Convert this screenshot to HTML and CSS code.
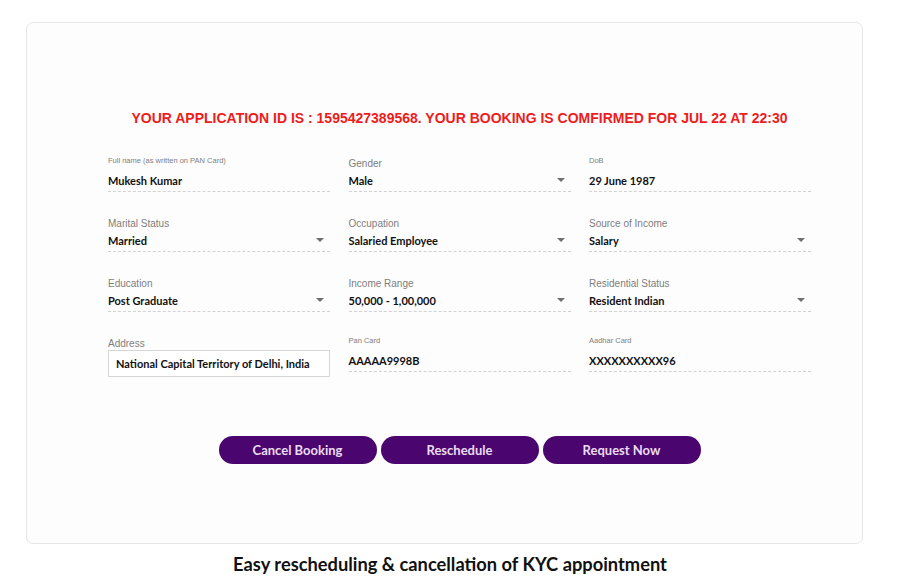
FILE: index.html
```html
<!DOCTYPE html>
<html lang="en">
  <head>
    <title>KYC Booking</title>
    <meta charset="UTF-8" />
    <meta name="viewport" content="width=device-width" />
    <link rel="stylesheet" href="styles.css">
  </head>
  <body>
    <section class="card">
      <h1 class="card__title">YOUR APPLICATION ID IS : 1595427389568. YOUR BOOKING IS COMFIRMED FOR JUL 22 AT 22:30</h1>
      <div class="fields">
        <div class="field">
          <span class="field__label field__label--small">Full name (as written on PAN Card)</span>
          <div class="field__value">Mukesh Kumar</div>
        </div>
        <div class="field">
          <span class="field__label">Gender</span>
          <div class="field__value">Male <i class="caret"></i></div>
        </div>
        <div class="field">
          <span class="field__label field__label--small">DoB</span>
          <div class="field__value">29 June 1987</div>
        </div>

        <div class="field">
          <span class="field__label">Marital Status</span>
          <div class="field__value">Married <i class="caret"></i></div>
        </div>
        <div class="field">
          <span class="field__label">Occupation</span>
          <div class="field__value">Salaried Employee <i class="caret"></i></div>
        </div>
        <div class="field">
          <span class="field__label">Source of Income</span>
          <div class="field__value">Salary <i class="caret"></i></div>
        </div>

        <div class="field">
          <span class="field__label">Education</span>
          <div class="field__value">Post Graduate <i class="caret"></i></div>
        </div>
        <div class="field">
          <span class="field__label">Income Range</span>
          <div class="field__value">50,000 - 1,00,000 <i class="caret"></i></div>
        </div>
        <div class="field">
          <span class="field__label">Residential Status</span>
          <div class="field__value">Resident Indian <i class="caret"></i></div>
        </div>

        <div class="field">
          <span class="field__label">Address</span>
          <div class="field__box">National Capital Territory of Delhi, India</div>
        </div>
        <div class="field">
          <span class="field__label field__label--small">Pan Card</span>
          <div class="field__value">AAAAA9998B</div>
        </div>
        <div class="field">
          <span class="field__label field__label--small">Aadhar Card</span>
          <div class="field__value">XXXXXXXXXX96</div>
        </div>
      </div>
      <div class="actions">
        <button class="button">Cancel Booking</button>
        <button class="button">Reschedule</button>
        <button class="button">Request Now</button>
      </div>
    </section>
    <p class="caption">Easy rescheduling &amp; cancellation of KYC appointment</p>
  </body>
</html>
```

FILE: styles.css
```css
body {
  margin: 0;
  padding: 22px 37px 0 26px;
  background: #ffffff;
  font-family: "Liberation Sans", Arial, sans-serif;
}

.card {
  box-sizing: border-box;
  height: 522px;
  padding: 85px 51px 0 81px;
  background: #fdfdfd;
  border: 1px solid #e6e6e6;
  border-radius: 7px;
}

.card__title {
  margin: 0;
  font-size: 14px;
  line-height: 20px;
  font-weight: bold;
  text-align: center;
  color: #ee1c1c;
  white-space: nowrap;
}

.fields {
  display: grid;
  grid-template-columns: 1fr 1fr 1fr;
  column-gap: 18.5px;
  row-gap: 24px;
  margin-top: 28px;
}

.field {
  display: flex;
  flex-direction: column;
}

.field__label {
  height: 14px;
  line-height: 15px;
  font-size: 10px;
  color: #7d7d7d;
}

.field__label--small {
  font-size: 7.5px;
  line-height: 10px;
}

.field__value {
  display: flex;
  justify-content: space-between;
  align-items: center;
  height: 20px;
  padding-bottom: 1px;
  font-family: Lato, sans-serif;
  font-weight: bold;
  font-size: 11px;
  color: #111;
  border-bottom: 1px dashed #d2d2d2;
}

.field__box {
  box-sizing: border-box;
  height: 27px;
  padding: 0 7px;
  line-height: 25px;
  font-family: Lato, sans-serif;
  font-weight: bold;
  font-size: 11px;
  color: #111;
  white-space: nowrap;
  border: 1px solid #d6d6d6;
  background: #fff;
}

.caret {
  width: 0;
  height: 0;
  margin-right: 6px;
  border-left: 4px solid transparent;
  border-right: 4px solid transparent;
  border-top: 4px solid #6f6f6f;
}

.actions {
  display: flex;
  justify-content: center;
  gap: 4px;
  margin-top: 59px;
}

.button {
  width: 158px;
  height: 28px;
  padding: 0;
  border: none;
  border-radius: 14px;
  background: #4b056f;
  color: #eadcf2;
  font-family: Lato, sans-serif;
  font-weight: bold;
  font-size: 13px;
}

.caption {
  margin: 8px -37px 0 -26px;
  line-height: 24px;
  text-align: center;
  font-family: Lato, sans-serif;
  font-weight: bold;
  font-size: 18.3px;
  color: #111;
}
```
